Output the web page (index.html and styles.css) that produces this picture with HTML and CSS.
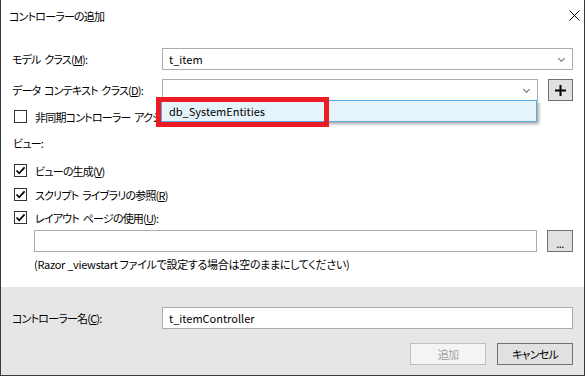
FILE: index.html
```html
<!DOCTYPE html>
<html lang="ja">
<head>
<meta charset="utf-8">
<link rel="stylesheet" href="styles.css">
</head>
<body>
<div class="window">
  <div class="titlebar">
    <span class="title jp">コントローラーの追加</span>
    <svg class="close" width="11" height="11" viewBox="0 0 11 11"><path d="M0.5 0.5 L10.5 10.5 M10.5 0.5 L0.5 10.5" stroke="#000" stroke-width="1" fill="none"/></svg>
  </div>
  <div class="form">
    <div class="row r-model">
      <label class="lbl jp">モデル クラス(<u>M</u>):</label>
      <div class="combo"><span class="val">t_item</span><span class="chev"></span></div>
    </div>
    <div class="row r-ctx">
      <label class="lbl jp">データ コンテキスト クラス(<u>D</u>):</label>
      <div class="combo short"><span class="val"></span><span class="chev"></span></div>
      <div class="btn small plus">
        <svg width="11" height="11" viewBox="0 0 11 11"><path d="M5.5 0 V11 M0 5.5 H11" stroke="#000" stroke-width="2" fill="none"/></svg>
      </div>
    </div>
    <div class="check r-async">
      <span class="box"></span><span class="jp clip">非同期コントローラー アクションの使用(<u>A</u>)</span>
    </div>
    <div class="section jp">ビュー:</div>
    <div class="check r-view">
      <span class="box on"><svg width="11" height="11" viewBox="0 0 11 11"><path d="M1.5 5.5 L4.2 8.3 L9.6 2.4" stroke="#000" stroke-width="1.7" fill="none"/></svg></span><span class="jp">ビューの生成(<u>V</u>)</span>
    </div>
    <div class="check r-script">
      <span class="box on"><svg width="11" height="11" viewBox="0 0 11 11"><path d="M1.5 5.5 L4.2 8.3 L9.6 2.4" stroke="#000" stroke-width="1.7" fill="none"/></svg></span><span class="jp">スクリプト ライブラリの参照(<u>R</u>)</span>
    </div>
    <div class="check r-layout">
      <span class="box on"><svg width="11" height="11" viewBox="0 0 11 11"><path d="M1.5 5.5 L4.2 8.3 L9.6 2.4" stroke="#000" stroke-width="1.7" fill="none"/></svg></span><span class="jp">レイアウト ページの使用(<u>U</u>):</span>
    </div>
    <div class="row r-path">
      <div class="textbox"></div>
      <div class="btn small dots"><span>...</span></div>
    </div>
    <div class="note">(Razor _viewstart ファイルで設定する場合は空のままにしてください)</div>
  </div>
  <div class="footer">
    <div class="row r-name">
      <label class="lbl jp">コントローラー名(<u>C</u>):</label>
      <div class="textbox wide"><span class="val">t_itemController</span></div>
    </div>
    <div class="buttons">
      <div class="btn big disabled"><span class="jp">追加</span></div>
      <div class="btn big"><span class="jp">キャンセル</span></div>
    </div>
  </div>

  <div class="dropdown"><span>db_SystemEntities</span></div>
  <div class="highlight"></div>
</div>
</body>
</html>
```
FILE: styles.css
```css
* { box-sizing: border-box; }
html, body { margin: 0; padding: 0; background: #fff; }
body {
  font-family: "Noto Sans CJK JP", "Noto Sans", sans-serif;
  font-size: 11px;
  font-feature-settings: "palt";
  color: #000;
}
.jp { letter-spacing: -0.8px; word-spacing: 2px; white-space: nowrap; }
u { text-decoration: underline; text-underline-offset: 1px; }
.window {
  position: relative;
  width: 585px;
  height: 376px;
  border: 1px solid #3a3a3a;
  border-top: none;
  background: #fff;
  display: flex;
  flex-direction: column;
  overflow: hidden;
}
.titlebar {
  height: 30px;
  display: flex;
  align-items: center;
  justify-content: space-between;
  padding: 0 4px 0 8px;
}
.title { line-height: 16px; margin-top: 1px; }
.form {
  height: 257px;
  padding: 18px 11px 0 11px;
  display: flex;
  flex-direction: column;
}
.row { display: flex; align-items: center; height: 22px; flex: none; }
.lbl { width: 150px; flex: none; line-height: 16px; }
.r-model { margin-bottom: 9px; }
.combo {
  flex: 1;
  height: 22px;
  border: 1px solid #acacac;
  background: #fff;
  display: flex;
  align-items: center;
  padding: 0 0 0 6px;
  position: relative;
}
.combo.short { flex: none; width: 376px; }
.val { line-height: 16px; }
.chev {
  position: absolute;
  right: 8px;
  top: 7px;
  width: 5px;
  height: 5px;
  border-right: 1px solid #707070;
  border-bottom: 1px solid #707070;
  transform: rotate(45deg);
}
.btn {
  background: #e1e1e1;
  border: 1px solid #adadad;
  display: flex;
  align-items: center;
  justify-content: center;
}
.btn.small { width: 26px; height: 22px; margin-left: 10px; border-color: #707070; }
.dots span { font-size: 11px; line-height: 10px; margin-top: 4px; letter-spacing: -0.5px; }
.check { display: flex; align-items: center; height: 23px; flex: none; }
.check .box {
  width: 13px;
  height: 13px;
  border: 1px solid #333;
  background: #fff;
  margin: 0 8px 0 2px;
  display: flex;
  align-items: center;
  justify-content: center;
  flex: none;
}
.check span:last-child { line-height: 16px; }
.check .clip { width: 122px; overflow: hidden; }
.r-async { margin-top: 4px; }
.section { height: 23px; line-height: 23px; margin-top: 4px; padding-left: 1px; flex: none; }
.r-view { margin-top: 4px; }
.r-script { margin-top: 1px; }
.r-path { margin-left: 22px; margin-top: 1px; }
.textbox {
  flex: 1;
  height: 22px;
  border: 1px solid #acacac;
  background: #fff;
  display: flex;
  align-items: center;
  padding-left: 6px;
}
.note { margin-left: 22px; margin-top: 3px; line-height: 18px; letter-spacing: -0.3px; white-space: nowrap; }
.footer {
  flex: 1;
  background: #e6e6e6;
  padding: 20px 11px 0 11px;
  display: flex;
  flex-direction: column;
}
.buttons {
  display: flex;
  justify-content: flex-end;
  gap: 11px;
  margin-top: 14px;
}
.btn.big { width: 76px; height: 22px; border-color: #707070; line-height: 16px; }
.btn.disabled { background: #f4f4f4; border-color: #bfbfbf; color: #a0a0a0; }

.dropdown {
  position: absolute;
  left: 160px;
  top: 100px;
  width: 376px;
  height: 22px;
  background: #e5f3fb;
  border: 1px solid #5aa8e0;
  box-shadow: 2px 2px 3px rgba(0,0,0,0.35);
  padding-left: 7px;
  display: flex;
  align-items: center;
}
.dropdown span { line-height: 16px; }
.highlight {
  position: absolute;
  left: 155px;
  top: 97px;
  width: 173px;
  height: 30px;
  border: 5px solid #ec1c24;
}
```
